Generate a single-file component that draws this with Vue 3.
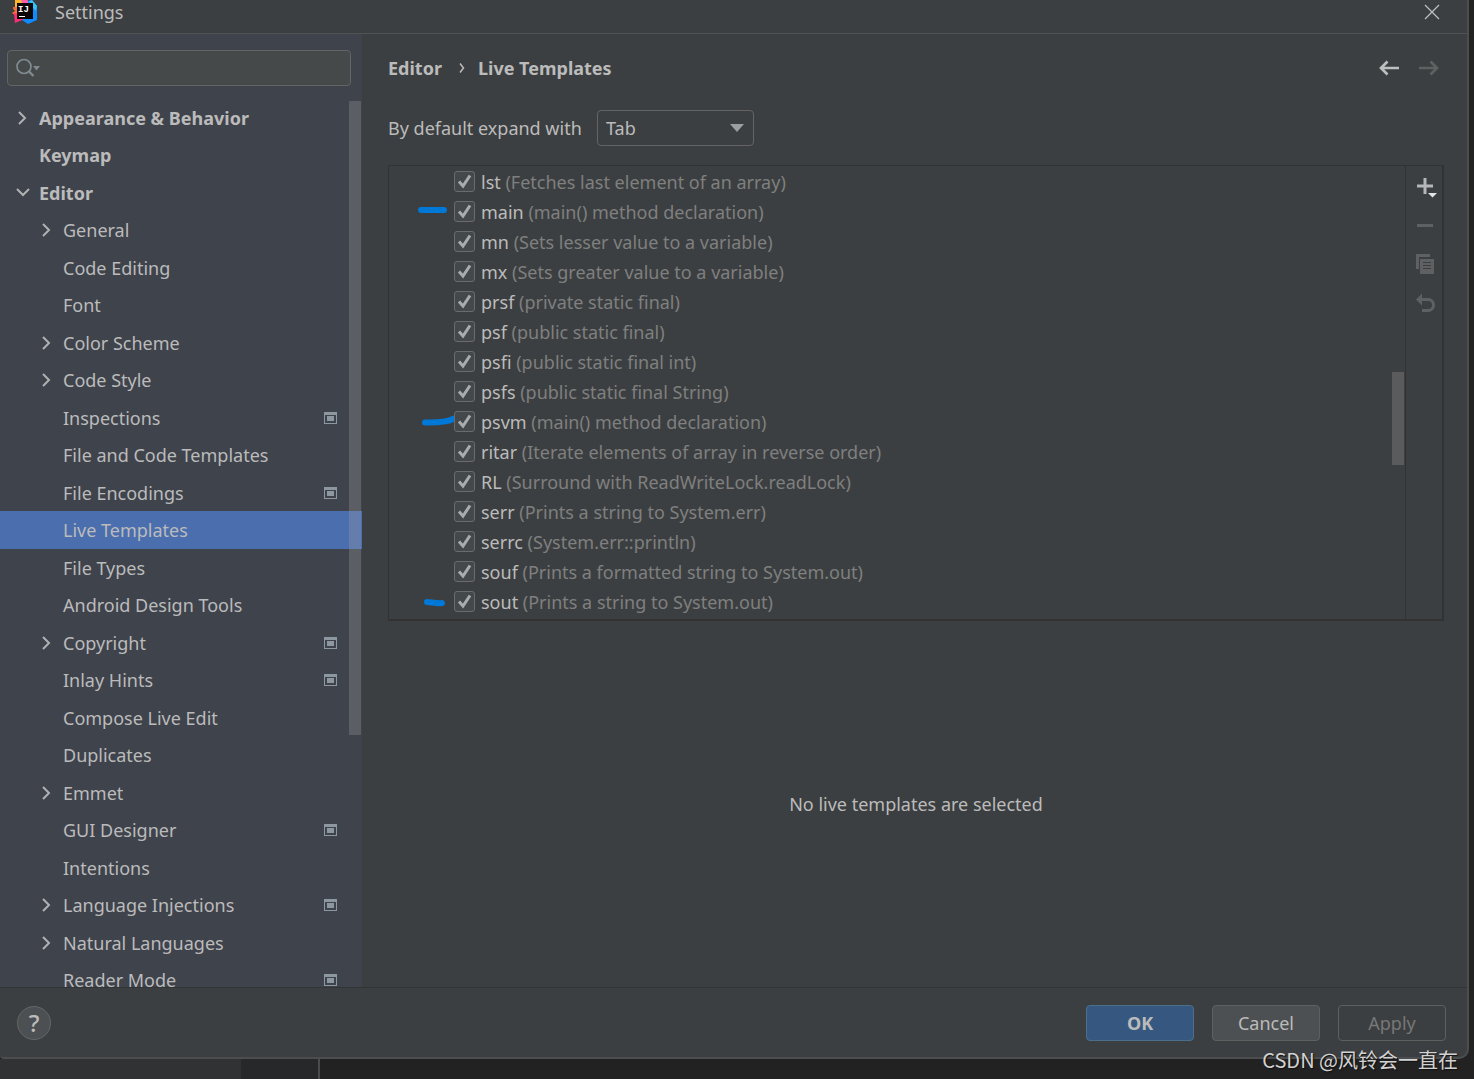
<script setup>
import { ref } from 'vue'

const tree = [
  { label: 'Appearance & Behavior', top: true, arrow: 'right' },
  { label: 'Keymap', top: true },
  { label: 'Editor', top: true, arrow: 'down' },
  { label: 'General', arrow: 'right' },
  { label: 'Code Editing' },
  { label: 'Font' },
  { label: 'Color Scheme', arrow: 'right' },
  { label: 'Code Style', arrow: 'right' },
  { label: 'Inspections', project: true },
  { label: 'File and Code Templates' },
  { label: 'File Encodings', project: true },
  { label: 'Live Templates', selected: true },
  { label: 'File Types' },
  { label: 'Android Design Tools' },
  { label: 'Copyright', arrow: 'right', project: true },
  { label: 'Inlay Hints', project: true },
  { label: 'Compose Live Edit' },
  { label: 'Duplicates' },
  { label: 'Emmet', arrow: 'right' },
  { label: 'GUI Designer', project: true },
  { label: 'Intentions' },
  { label: 'Language Injections', arrow: 'right', project: true },
  { label: 'Natural Languages', arrow: 'right' },
  { label: 'Reader Mode', project: true }
]

const templates = ref([
  { key: 'lst', text: 'Fetches last element of an array', on: true },
  { key: 'main', text: 'main() method declaration', on: true, mark: 'M4 13H27' },
  { key: 'mn', text: 'Sets lesser value to a variable', on: true },
  { key: 'mx', text: 'Sets greater value to a variable', on: true },
  { key: 'prsf', text: 'private static final', on: true },
  { key: 'psf', text: 'public static final', on: true },
  { key: 'psfi', text: 'public static final int', on: true },
  { key: 'psfs', text: 'public static final String', on: true },
  { key: 'psvm', text: 'main() method declaration', on: true, mark: 'M8 15.500C18 15.500 28 16 36 12' },
  { key: 'ritar', text: 'Iterate elements of array in reverse order', on: true },
  { key: 'RL', text: 'Surround with ReadWriteLock.readLock', on: true },
  { key: 'serr', text: 'Prints a string to System.err', on: true },
  { key: 'serrc', text: 'System.err::println', on: true },
  { key: 'souf', text: 'Prints a formatted string to System.out', on: true },
  { key: 'sout', text: 'Prints a string to System.out', on: true, mark: 'M10 15C14 15 20 17 25 16' }
])

const expandWith = ref('Tab')
</script>

<template>
  <div class="desktop">
    <div class="window">
      <header class="titlebar">
        <svg class="logo" width="26" height="26" viewBox="0 0 26 26" aria-hidden="true">
          <path d="M3 1 7 0 12 0 13 12 4 12 1 10 3 8Z" fill="#fdb62b" />
          <path d="M1 8 12 8 12 18 8 20 0 14 3 12Z" fill="#ff6a3d" />
          <path d="M2 14 12 16 15 22 10 21 3 24Z" fill="#ff2d77" />
          <path d="M9 1 14 0 18 3 12 8Z" fill="#ff5fa8" />
          <path d="M16 2 20 1 25 7 25 21 16 25 10 21 18 17Z" fill="#0d8bff" />
          <path d="M17 2 20 1 25 7 24 12 20 8Z" fill="#35c2f5" />
          <rect x="5" y="4" width="16" height="16" fill="#0b0508" />
          <path d="M7 17.500H13" stroke="#fff" />
          <text x="6" y="13" class="logo-text">IJ</text>
        </svg>
        <h1>Settings</h1>
        <button class="plain close" aria-label="Close">
          <svg width="16" height="16" viewBox="0 0 16 16"><path d="M1 1 15 15M15 1 1 15" stroke="#bcbec0" stroke-width="1.300" fill="none" /></svg>
        </button>
      </header>

      <div class="body">
        <aside class="sidebar">
          <div class="search">
            <svg width="26" height="20" viewBox="0 0 26 20" aria-hidden="true">
              <circle cx="8" cy="8.500" r="7" fill="none" stroke="#7f8b91" stroke-width="1.700" />
              <path d="M13 13.500 17.500 18" stroke="#7f8b91" stroke-width="2.300" />
              <path d="M17 8H24L20.500 12.500Z" fill="#7f8b91" />
            </svg>
            <input type="text" aria-label="Search settings" />
          </div>
          <nav class="tree">
            <ul>
              <li v-for="item in tree" :key="item.label" :class="{ selected: item.selected, top: item.top }">
                <span class="arrow">
                  <svg v-if="item.arrow === 'right'" width="14" height="14" viewBox="0 0 14 14"><path d="M4 1 10 7 4 13" /></svg>
                  <svg v-if="item.arrow === 'down'" width="16" height="14" viewBox="0 0 16 14"><path d="M2 3 8 9 14 3" /></svg>
                </span>
                <a href="#">{{ item.label }}</a>
                <svg v-if="item.project" class="project" width="13" height="12" viewBox="0 0 13 12">
                  <path d="M0 0H13V12H0ZM1 3V11H12V3Z" fill="#8c979f" fill-rule="evenodd" />
                  <rect x="3" y="4" width="7" height="5" fill="#8c979f" />
                </svg>
              </li>
            </ul>
            <div class="tree-thumb"></div>
          </nav>
        </aside>

        <main class="content">
          <div class="crumbs">
            <a href="#">Editor</a>
            <svg width="6" height="12" viewBox="0 0 6 12"><path d="M1 1.500 4.500 6 1 10.500" fill="none" stroke="#bbb" stroke-width="1.500" /></svg>
            <a href="#">Live Templates</a>
            <div class="history">
              <button class="plain" aria-label="Back">
                <svg width="20" height="16" viewBox="0 0 20 16"><path d="M20 8H2M8.500 1.500 2 8 8.500 14.500" fill="none" stroke="#bcbec0" stroke-width="2.700" /></svg>
              </button>
              <button class="plain" aria-label="Forward" disabled>
                <svg width="20" height="16" viewBox="0 0 20 16"><path d="M0 8H18M11.500 1.500 18 8 11.500 14.500" fill="none" stroke="#5e6061" stroke-width="2.700" /></svg>
              </button>
            </div>
          </div>

          <div class="expand">
            <label for="expand-with">By default expand with</label>
            <div class="combo">
              <select id="expand-with" v-model="expandWith">
                <option>Tab</option>
                <option>Enter</option>
                <option>Space</option>
              </select>
              <svg width="14" height="8" viewBox="0 0 14 8"><path d="M0 0H14L7 8Z" fill="#9c9fa1" /></svg>
            </div>
          </div>

          <section class="panel">
            <ul class="templates">
              <li v-for="t in templates" :key="t.key">
                <svg v-if="t.mark" class="mark" width="42" height="30" viewBox="0 0 42 30"><path :d="t.mark" /></svg>
                <label>
                  <span class="check">
                    <input v-model="t.on" type="checkbox" />
                    <svg v-if="t.on" width="21" height="21" viewBox="0 0 21 21"><path d="M5 10.500 9 15 16 4.500" /></svg>
                  </span>
                  <span class="name">{{ t.key }} <span class="desc">({{ t.text }})</span></span>
                </label>
              </li>
            </ul>
            <div class="list-thumb"></div>
            <div class="tools">
              <button class="plain" aria-label="Add">
                <svg width="22" height="24" viewBox="0 0 22 24"><path d="M1 10H17M9 2V18" stroke="#b4b6b8" stroke-width="3" /><path d="M12 17H21L16.500 21.500Z" fill="#e4e4e4" /></svg>
              </button>
              <button class="plain" aria-label="Remove" disabled>
                <svg width="22" height="24" viewBox="0 0 22 24"><path d="M1 10.500H17" stroke="#5e6061" stroke-width="3" /></svg>
              </button>
              <button class="plain" aria-label="Duplicate" disabled>
                <svg width="22" height="24" viewBox="0 0 22 24"><path d="M0 0H14V3H3V15H0Z" fill="#5e6061" /><path d="M4 5H18V20H4ZM7 8V9H15V8ZM7 11V12H15V11ZM7 14V15H15V14Z" fill="#5e6061" fill-rule="evenodd" /></svg>
              </button>
              <button class="plain" aria-label="Restore defaults" disabled>
                <svg width="22" height="24" viewBox="0 0 22 24"><path d="M0 6.500 6 0.500V12.500Z" fill="#5e6061" /><path d="M5 6.500H12A5.500 5.500 0 0 1 12 17.500H6" fill="none" stroke="#5e6061" stroke-width="3" /></svg>
              </button>
            </div>
          </section>

          <p class="empty">No live templates are selected</p>
        </main>
      </div>

      <footer class="footer">
        <button class="help" aria-label="Help">?</button>
        <div class="actions">
          <button class="btn primary">OK</button>
          <button class="btn">Cancel</button>
          <button class="btn" disabled>Apply</button>
        </div>
      </footer>
    </div>

    <div class="taskstrip"><span class="strip-a"></span><span class="strip-b"></span></div>
    <div class="watermark">CSDN @风铃会一直在</div>
  </div>
</template>

<style>
body {
  margin: 0;
  background: #222;
}
</style>

<style scoped>
* {
  box-sizing: border-box;
}
.desktop {
  position: relative;
  display: flex;
  flex-direction: column;
  height: 100vh;
  overflow: hidden;
  background: #222;
  color: #bbb;
  font: 18px/24px "Noto Sans", "Noto Sans CJK SC", sans-serif;
}
.window {
  flex: 1;
  min-height: 0;
  display: flex;
  flex-direction: column;
  margin-right: 5px;
  background: #3c3f41;
  border: solid #4b4d4e;
  border-width: 0 2px 2px 0;
  border-radius: 0 0 10px 4px;
  overflow: hidden;
}
a {
  color: inherit;
  text-decoration: none;
}
ul {
  list-style: none;
  margin: 0;
  padding: 0;
}
svg {
  display: block;
}
button,
input,
select {
  font: inherit;
  color: inherit;
}
.plain {
  display: block;
  padding: 0;
  border: 0;
  background: none;
}
.titlebar {
  display: flex;
  align-items: center;
  flex: none;
  height: 34px;
  padding: 0 27px 9px 12px;
  border-bottom: 1px solid #505354;
}
.logo-text {
  font: bold 9px "Liberation Mono", monospace;
  fill: #fff;
}
.titlebar h1 {
  margin: 0 0 0 17px;
  font-size: 18px;
  font-weight: 400;
}
.close {
  margin-left: auto;
}
.body {
  flex: 1;
  min-height: 0;
  display: flex;
}
.sidebar {
  display: flex;
  flex-direction: column;
  width: 362px;
  flex: none;
  background: #3f434c;
}
.search {
  display: flex;
  align-items: center;
  flex: none;
  height: 36px;
  margin: 16px 11px 13px 7px;
  padding-left: 8px;
  background: #45494a;
  border: 1px solid #646464;
  border-radius: 4px;
}
.search input {
  flex: 1;
  min-width: 0;
  border: 0;
  outline: 0;
  background: none;
}
.tree {
  position: relative;
  flex: 1;
  min-height: 0;
  overflow: hidden;
}
.tree li {
  display: flex;
  align-items: center;
  height: 37px;
  padding: 0 25px 0 39px;
}
.tree li:nth-child(even) {
  height: 38px;
}
.tree li.top {
  padding-left: 15px;
  font-weight: 700;
}
.tree li.selected {
  background: #4b6eaf;
}
.arrow {
  width: 24px;
  flex: none;
}
.arrow path {
  fill: none;
  stroke: #afb1b3;
  stroke-width: 2;
}
.project {
  margin-left: auto;
}
.tree-thumb {
  position: absolute;
  top: 2px;
  right: 1px;
  width: 12px;
  height: 634px;
  background: rgba(166, 166, 166, 0.28);
}
.content {
  flex: 1;
  min-width: 0;
  display: flex;
  flex-direction: column;
  padding: 22px 23px 0 26px;
}
.crumbs {
  display: flex;
  align-items: center;
  height: 24px;
  font-weight: 700;
}
.crumbs > svg {
  margin: 0 13px 0 17px;
}
.history {
  display: flex;
  gap: 20px;
  margin-left: auto;
  padding-right: 5px;
}
.expand {
  display: flex;
  align-items: center;
  margin: 30px 0 19px;
}
.expand label {
  min-width: 209px;
}
.combo {
  position: relative;
}
.combo select {
  display: block;
  width: 157px;
  height: 36px;
  padding: 0 8px;
  appearance: none;
  background: #3c3f41;
  border: 1px solid #646464;
  border-radius: 4px;
}
.combo svg {
  position: absolute;
  top: 14px;
  right: 10px;
  pointer-events: none;
}
.panel {
  position: relative;
  display: flex;
  flex: none;
  border: 1px solid #323232;
  border-width: 1px 2px 2px 1px;
}
.templates {
  flex: 1;
  padding: 1px 0 2px;
}
.templates li {
  position: relative;
  height: 30px;
  padding-left: 65px;
}
.templates label {
  display: flex;
  align-items: center;
  gap: 6px;
  height: 30px;
}
.check {
  position: relative;
  margin-bottom: 2px;
}
.check input {
  display: block;
  width: 21px;
  height: 21px;
  margin: 0;
  appearance: none;
  background: #43494a;
  border: 1px solid #6b6b6b;
  border-radius: 3px;
}
.check svg {
  position: absolute;
  top: 0;
  left: 0;
  pointer-events: none;
}
.check path {
  fill: none;
  stroke: #a9abad;
  stroke-width: 3;
}
.desc {
  color: #7f7f7f;
}
.mark {
  position: absolute;
  top: 0;
  left: 28px;
}
.mark path {
  fill: none;
  stroke: #0078d7;
  stroke-width: 6;
  stroke-linecap: round;
}
.list-thumb {
  position: absolute;
  top: 206px;
  right: 38px;
  width: 12px;
  height: 93px;
  background: #595b5d;
}
.tools {
  display: flex;
  flex-direction: column;
  gap: 15px;
  width: 37px;
  padding: 10px 0 0 10px;
  border-left: 1px solid #323232;
}
.empty {
  flex: 1;
  display: flex;
  align-items: center;
  justify-content: center;
  margin: 0;
}
.footer {
  display: flex;
  align-items: center;
  justify-content: space-between;
  flex: none;
  height: 70px;
  padding: 1px 21px 0 17px;
  border-top: 1px solid #323436;
}
.help {
  width: 34px;
  height: 34px;
  padding: 0;
  font-size: 24px;
  font-weight: 500;
  background: #4c5052;
  border: 1px solid #646667;
  border-radius: 50%;
}
.actions {
  display: flex;
  gap: 18px;
}
.btn {
  width: 108px;
  height: 36px;
  padding: 0;
  background: #4c5052;
  border: 1px solid #5e6060;
  border-radius: 4px;
}
.btn.primary {
  background: #365880;
  border-color: #4c708c;
  font-weight: 700;
}
.btn:disabled {
  background: none;
  color: #777;
}
.taskstrip {
  display: flex;
  flex: none;
  height: 20px;
}
.strip-a {
  width: 241px;
  background: #313234;
}
.strip-b {
  width: 79px;
  background: #27282a;
  border-right: 2px solid #4a4b4d;
}
.watermark {
  position: absolute;
  right: 16px;
  bottom: 7px;
  color: #d2d2d2;
  font: 20px/24px "Noto Sans CJK SC", sans-serif;
  text-shadow: 1px 1px 1px #111;
}
</style>
